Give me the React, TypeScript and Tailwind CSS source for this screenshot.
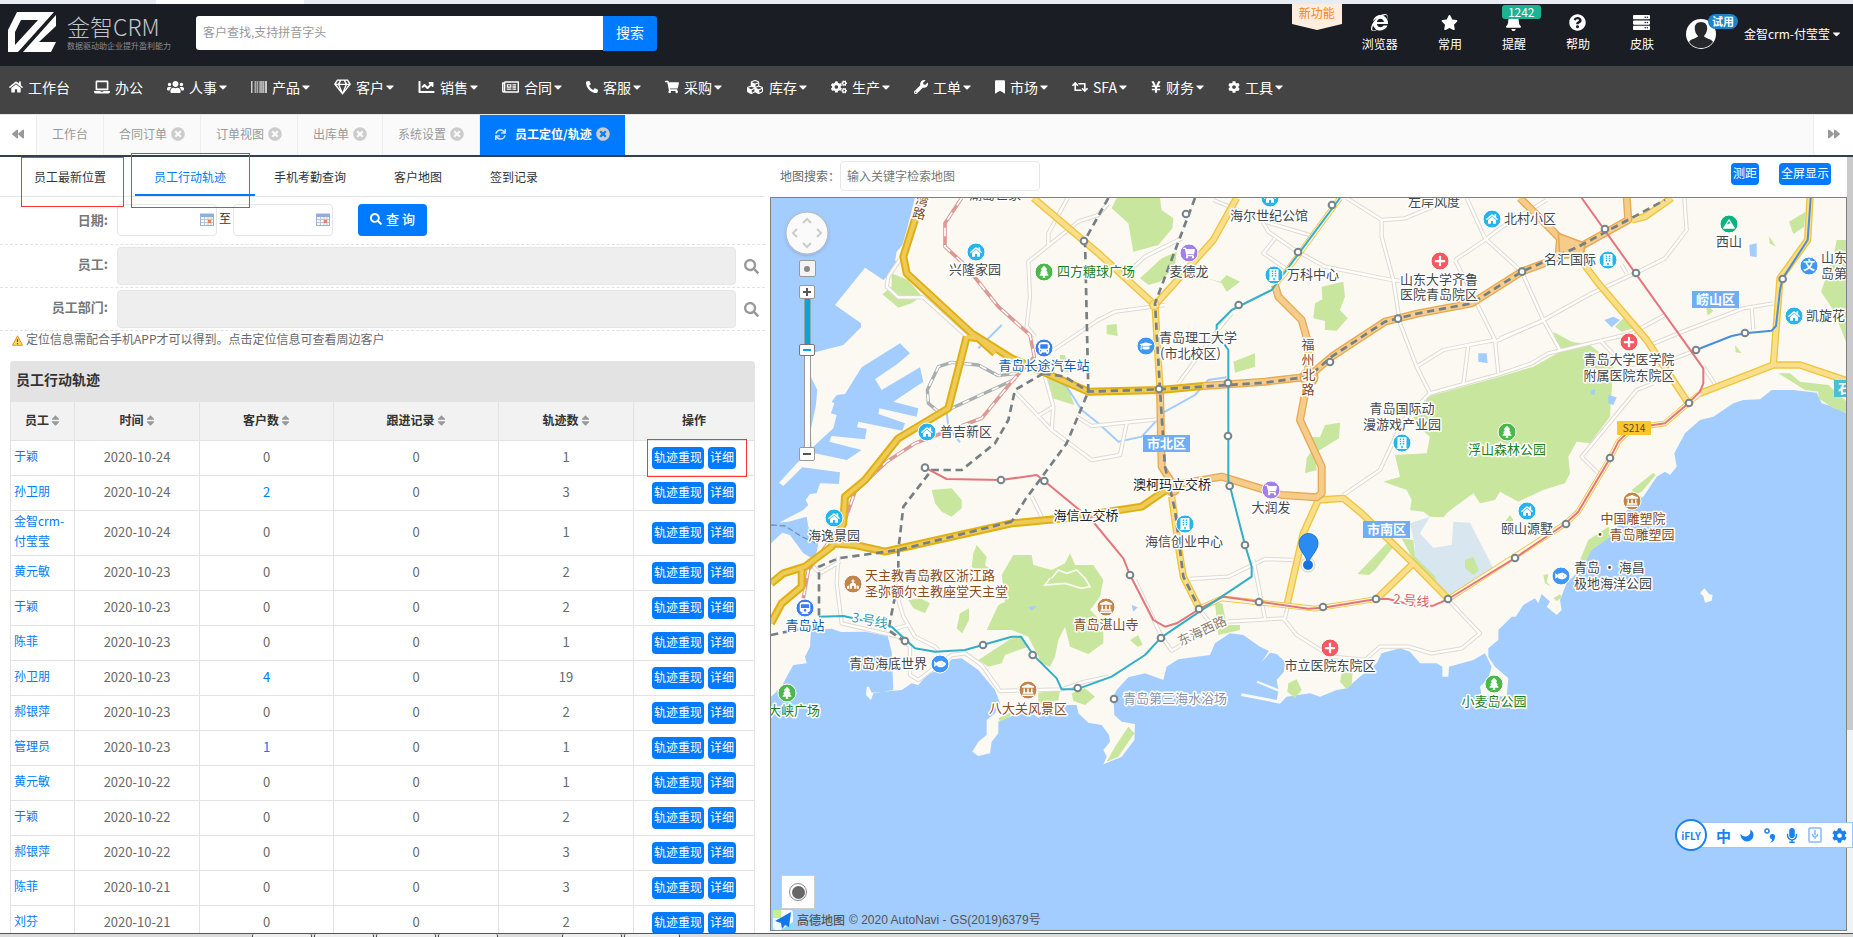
import React, { useState } from 'react';
import type { IconType } from 'react-icons';
import {
  FaBackward, FaBarcode, FaBell, FaBookmark, FaBuilding, FaBus, FaCaretDown, FaChartLine, FaChurch, FaCog, FaCogs,
  FaCubes, FaFish, FaForward, FaGraduationCap, FaHome, FaInternetExplorer, FaLandmark, FaLaptop, FaMicrophone, FaMoon,
  FaMountain, FaPhone, FaPlus, FaQuestionCircle, FaRegGem, FaRegNewspaper, FaRetweet, FaSearch, FaServer,
  FaShoppingCart, FaSort, FaStar, FaSync, FaTimesCircle, FaTrain, FaTree, FaUsers, FaWrench, FaYenSign,
} from 'react-icons/fa';

interface NavItem {
  label: string;
  icon: IconType;
  iconClass: string;
  menu: boolean;
}

const navItems: NavItem[] = [
  { label: '工作台', icon: FaHome, iconClass: 'w-[14px]', menu: false },
  { label: '办公', icon: FaLaptop, iconClass: 'w-4', menu: false },
  { label: '人事', icon: FaUsers, iconClass: 'w-[17px]', menu: true },
  { label: '产品', icon: FaBarcode, iconClass: 'w-4', menu: true },
  { label: '客户', icon: FaRegGem, iconClass: 'w-[17px]', menu: true },
  { label: '销售', icon: FaChartLine, iconClass: 'w-[17px]', menu: true },
  { label: '合同', icon: FaRegNewspaper, iconClass: 'w-[17px]', menu: true },
  { label: '客服', icon: FaPhone, iconClass: 'w-3 -scale-x-100', menu: true },
  { label: '采购', icon: FaShoppingCart, iconClass: 'w-[14px]', menu: true },
  { label: '库存', icon: FaCubes, iconClass: 'w-[18px]', menu: true },
  { label: '生产', icon: FaCogs, iconClass: 'w-4', menu: true },
  { label: '工单', icon: FaWrench, iconClass: 'w-[14px]', menu: true },
  { label: '市场', icon: FaBookmark, iconClass: 'w-[10px]', menu: true },
  { label: 'SFA', icon: FaRetweet, iconClass: 'w-4', menu: true },
  { label: '财务', icon: FaYenSign, iconClass: 'w-[10px]', menu: true },
  { label: '工具', icon: FaCog, iconClass: 'w-3', menu: true },
];

const quickLinks = [
  { label: '浏览器', icon: FaInternetExplorer, badge: '' },
  { label: '常用', icon: FaStar, badge: '' },
  { label: '提醒', icon: FaBell, badge: '1242' },
  { label: '帮助', icon: FaQuestionCircle, badge: '' },
  { label: '皮肤', icon: FaServer, badge: '' },
];

const pageTabs = ['合同订单', '订单视图', '出库单', '系统设置'];
const subTabs = ['员工最新位置', '员工行动轨迹', '手机考勤查询', '客户地图', '签到记录'];

const rows = [
  { name: '于颖', date: '2020-10-24', customers: 0, follows: 0, tracks: 1 },
  { name: '孙卫朋', date: '2020-10-24', customers: 2, follows: 0, tracks: 3 },
  { name: '金智crm-付莹莹', date: '2020-10-24', customers: 0, follows: 0, tracks: 1 },
  { name: '黄元敏', date: '2020-10-23', customers: 0, follows: 0, tracks: 2 },
  { name: '于颖', date: '2020-10-23', customers: 0, follows: 0, tracks: 2 },
  { name: '陈菲', date: '2020-10-23', customers: 0, follows: 0, tracks: 1 },
  { name: '孙卫朋', date: '2020-10-23', customers: 4, follows: 0, tracks: 19 },
  { name: '郝银萍', date: '2020-10-23', customers: 0, follows: 0, tracks: 2 },
  { name: '管理员', date: '2020-10-23', customers: 1, follows: 0, tracks: 1 },
  { name: '黄元敏', date: '2020-10-22', customers: 0, follows: 0, tracks: 1 },
  { name: '于颖', date: '2020-10-22', customers: 0, follows: 0, tracks: 2 },
  { name: '郝银萍', date: '2020-10-22', customers: 0, follows: 0, tracks: 3 },
  { name: '陈菲', date: '2020-10-21', customers: 0, follows: 0, tracks: 3 },
  { name: '刘芬', date: '2020-10-21', customers: 0, follows: 0, tracks: 2 },
];

const columns = [
  { title: '员工', sortable: true, className: 'w-16' },
  { title: '时间', sortable: true, className: 'w-[125px]' },
  { title: '客户数', sortable: true, className: 'w-[134px]' },
  { title: '跟进记录', sortable: true, className: 'w-[165px]' },
  { title: '轨迹数', sortable: true, className: 'w-[135px]' },
  { title: '操作', sortable: false, className: 'w-[121px]' },
];

// ---------- map data, three units to a pixel ----------

const LAND =
  '450,24 425,120 412,165 395,185 390,213 405,210 372,255 355,270 300,233 210,345 288,400 288,412 235,465 150,487 118,510 135,555 157,600 152,650 137,720 140,775 205,715 215,675 198,670 208,640 200,635 215,615 240,612 290,532 405,460 435,490 400,520 330,568 350,600 465,532 475,575 385,635 460,655 455,680 343,655 340,672 420,700 412,722 280,695 276,712 305,716 300,748 200,738 193,755 290,780 245,810 150,790 100,815 42,878 55,888 112,832 225,847 222,882 165,880 155,910 135,912 122,930 130,945 115,960 42,998 70,995 125,980 130,1010 160,1060 150,1110 115,1090 75,1035 52,1028 18,1060 18,1520 50,1490 65,1460 85,1425 125,1420 120,1400 135,1370 138,1320 200,1316 228,1326 300,1325 368,1338 380,1385 385,1500 325,1510 318,1530 303,1515 305,1490 312,1490 320,1508 410,1500 440,1480 460,1485 490,1450 530,1440 560,1408 590,1405 640,1440 690,1500 705,1540 690,1570 665,1590 665,1635 640,1655 622,1685 640,1698 675,1690 680,1655 700,1630 700,1595 760,1570 800,1568 820,1583 850,1570 880,1575 905,1545 935,1545 940,1570 970,1598 1010,1605 1032,1635 1035,1655 1015,1680 1025,1700 1015,1723 1070,1700 1108,1650 1110,1602 1070,1595 1048,1575 1045,1520 1055,1500 1090,1462 1140,1450 1195,1470 1205,1430 1240,1408 1335,1395 1350,1360 1395,1330 1435,1335 1485,1370 1512,1383 1488,1418 1515,1388 1535,1392 1560,1415 1557,1445 1535,1470 1540,1497 1477,1472 1475,1478 1540,1505 1535,1530 1430,1510 1428,1518 1545,1541 1565,1520 1635,1510 1665,1520 1715,1500 1745,1495 1785,1460 1835,1420 1850,1390 1905,1375 1935,1385 1965,1420 2015,1420 2032,1430 2032,1460 2050,1460 2052,1430 2125,1410 2160,1390 2180,1430 2170,1465 2145,1490 2150,1515 2225,1520 2230,1465 2190,1430 2170,1400 2170,1375 2200,1350 2200,1320 2240,1280 2252,1280 2275,1245 2310,1225 2320,1240 2330,1212 2355,1235 2345,1250 2375,1275 2390,1260 2385,1230 2405,1180 2445,1140 2470,1080 2535,1040 2575,980 2600,940 2635,920 2675,860 2700,845 2715,855 2735,830 2728,790 2760,730 2805,690 2845,680 2905,640 2935,630 2985,628 3020,600 3085,600 3155,608 3170,640 3205,650 3245,670 3245,24';

const GREENS = [
  '1055,24 1185,24 1190,60 1225,85 1222,115 1180,165 1105,185 1090,100 1040,55',
  '1125,265 1190,205 1235,185 1230,230 1185,275 1150,285',
  '380,250 430,270 470,318 440,340 400,353 352,313 380,290',
  '1025,405 1055,402 1058,438 1025,432',
  '850,560 905,580 928,645 862,625 848,590',
  '885,495 900,495 915,550 885,540',
  '500,900 560,895 590,930 590,955 560,980 530,965 510,940',
  '1325,265 1365,275 1385,255 1425,275 1385,305 1370,280',
  '1670,290 1735,275 1740,320 1725,360 1748,385 1715,422 1680,420 1680,393 1645,385 1650,340 1672,328',
  '1405,515 1470,490 1470,530 1410,548',
  '1680,705 1725,698 1722,745 1665,780 1650,790 1655,840 1620,850 1625,805 1645,775 1625,740 1665,742',
  '1985,620 2095,590 2205,560 2305,530 2385,485 2365,425 2420,455 2475,465 2545,520 2540,600 2535,680 2475,760 2435,755 2410,800 2415,850 2400,880 2335,900 2260,935 2205,905 2190,930 2145,940 2125,910 2050,965 2035,982 1995,980 1975,965 1935,960 1940,930 1925,900 1855,875 1905,860 1890,795 1985,790 1995,740 1935,690 1975,660',
  '625,1090 635,1065 665,1100 660,1125 680,1140 640,1145 620,1130',
  '665,1320 700,1245 720,1235 710,1155 745,1095 800,1095 805,1125 860,1140 900,1120 915,1090 930,1125 985,1125 1015,1170 1005,1220 975,1260 1015,1300 1015,1360 970,1392 915,1370 900,1310 880,1350 870,1400 855,1430 830,1420 790,1340 740,1320',
  '640,1410 740,1345 770,1340 790,1370 720,1395 710,1420 670,1430',
  '575,1315 585,1270 612,1255 612,1290 592,1330',
  '430,1230 465,1225 495,1240 480,1270 445,1255',
  '1095,1350 1120,1335 1133,1365 1118,1370',
  '920,1510 960,1495 990,1520 960,1545 925,1533',
  '820,1508 885,1500 880,1530 820,1545',
  '1090,1610 1108,1630 1060,1700 1025,1715 1050,1670',
  '700,1585 740,1565 735,1580 705,1595',
  '1350,1240 1372,1240 1385,1305 1425,1305 1425,1320 1360,1335',
  '1570,1480 1595,1468 1610,1500 1590,1525 1567,1505',
  '1730,1450 1763,1445 1760,1485 1745,1498 1725,1475',
  '1777,1152 1875,1050 1890,1065 1830,1140 1812,1155',
  '1910,1045 1945,1050 1950,1100 2012,1160 2012,1180 1950,1120',
  '2205,1015 2235,975 2245,990 2225,1020',
  '2445,1110 2470,1050 2530,1010 2545,1035 2480,1080 2465,1110',
  '2600,900 2665,848 2672,855 2630,905 2610,915',
  '2335,1155 2350,1152 2345,1175 2358,1190 2340,1180',
  '2365,1225 2385,1212 2390,1222 2375,1233',
  '3072,95 3122,65 3118,110 3085,132',
  '3168,305 3205,200 3215,150 3245,150 3245,460 3205,360',
  '3040,550 3075,550 3105,575 3190,585 3245,635 3245,668 3205,655 3160,625 3160,605 3120,600',
  '2550,410 2575,385 2605,415 2570,425',
  '2910,465 2930,490 2912,487',
  '3012,138 3033,170 3014,160',
  '2822,340 2845,362 2828,377',
];

const PONDS = [
  '2518,390 2545,380 2565,390 2540,412',
  '2953,165 2975,160 2975,202 2955,198',
  '2530,615 2555,622 2545,645 2530,640',
  '2140,490 2165,490 2168,520 2140,515',
  '2480,600 2492,598 2488,615 2476,612',
  '790,1250 815,1248 800,1262',
  '1100,1245 1118,1252 1105,1265',
];

const MINOR = [
  '908,24 850,130 850,170',
  '1030,40 1000,75 940,95 790,215 795,320 785,410 810,440',
  '865,480 1000,390 1050,365 1200,345',
  '1250,145 1140,200 1080,255',
  '405,208 370,260 365,290 400,322 475,322 600,435',
  '750,605 860,720 980,810 1065,795 1085,700',
  '840,560 865,650 860,720',
  '815,680 865,650',
  '935,680 980,708 1175,688',
  '1240,580 1350,430 1400,370',
  '1345,30 1490,90 1510,125 1590,180 1680,230 1880,270',
  '1530,145 1495,190 1560,235',
  '1500,95 1650,140',
  '1745,24 1850,90 1920,85 2040,35',
  '1850,90 1850,140 1885,270 1905,400 1955,530 1995,610',
  '1885,270 1960,280',
  '1995,610 2205,552 2300,520 2350,490 2600,430 2700,375',
  '1735,915 1845,840 1915,690 1995,610',
  '2105,24 2160,145 2270,245 2335,390 2385,480',
  '2070,210 2160,150 2205,115 2345,30',
  '2070,210 2135,340 2190,450 2200,550',
  '2190,455 2335,390 2480,310 2600,255 2700,205 2765,120 2758,24',
  '1955,530 2035,480 2110,465 2190,450',
  '2110,465 2095,585',
  '2205,445 2335,392',
  '2655,465 2765,420 2935,355 3025,340',
  '2960,350 2965,420',
  '2665,580 2615,600 2450,800 2500,850',
  '2505,450 2585,535 2665,530 2795,480',
  '2815,530 2855,590',
  '2570,225 2585,250',
  '800,920 830,980',
  '220,1100 215,1180 230,1300 400,1340 435,1370 435,1455 460,1470 560,1395 600,1390 650,1425 705,1503 890,1498 960,1475 1030,1460',
  '375,1320 430,1305',
  '400,1230 415,1280 450,1340 510,1370 520,1380',
  '125,1110 165,1150 225,1115',
  '1275,1167 1390,1160 1500,1107 1585,1110',
  '1465,1110 1500,1285',
  '1305,1260 1335,1298 1555,1285 1595,1335 1700,1400 1800,1410 1845,1370 1930,1370 2000,1390 2090,1375 2145,1330 2050,1230',
  '1560,1285 1570,1240',
  '1110,1170 1190,1340 1220,1382 1340,1310',
];

const YELLOW = [
  '805,24 1000,190 1170,345 1345,150 1415,24',
  '1170,345 1185,600',
  '1220,920 1245,1100 1255,1160 1303,1255',
  '1660,930 1615,1030 1567,1240',
  '1660,930 1735,925 1790,970 1945,1120 2050,1227',
  '1945,1120 1835,1227',
  '2455,220 2500,280 2645,450 2770,640',
  '2805,610 3025,525 3105,525 3245,572',
  '3135,24 3128,150 3045,265 3025,525',
  '2600,90 2640,80 2720,24',
];

const THIN_YELLOW = [
  '1725,24 1560,250 1530,285',
  '1303,1255 1370,1225 1650,1256 1835,1227',
  '2050,1227 2400,1002 2440,965 2535,805 2560,755 2600,715 2700,700 2772,638 2805,610',
];

const ORANGE = [
  '1315,588 1500,575 1630,560 1700,500 1860,395 1960,370 2120,340 2270,245 2350,215 2455,165 2590,90 2585,24',
  '1530,285 1540,320 1610,390 1630,460 1630,560 1605,690 1670,830 1670,910 1655,922 1550,915 1370,860 1225,885 1190,830 1185,600',
  '2265,24 2385,145 2450,180',
  '2385,145 2380,205',
];

const GOLD = [
  '470,24 415,200 425,250 620,430 740,505 970,605 1185,600 1315,588',
  '605,440 550,655 400,745 300,870 240,920 235,1000 200,1070 120,1130 55,1150 18,1180',
  '605,440 640,445 690,490',
  '200,1060 270,1065 360,1085 740,1000 900,985 1130,950 1225,885',
  '110,1130 110,1190 50,1240 18,1300',
];

const DASHED = [
  '1030,24 960,150 970,605 905,760 780,930 740,995',
  '740,995 400,1080 220,1105 162,1130 162,1290',
  '835,550 750,600 730,690 690,760 590,840 500,840 415,950 400,1080 400,1170 370,1320 420,1355',
  '835,550 900,560 970,605 1185,598 1500,578 1630,560 1700,500 1860,395 1960,370 2120,340 2270,245 2440,170 2700,30',
  '1290,24 1170,340 1185,600 1200,830 1230,960 1255,1160 1303,1255',
  '18,1335 100,1318',
];

const RAIL_PINK = '590,24 540,100 540,170 600,225 700,350 795,435 808,500 740,575 650,685 450,760 365,815 270,905 240,990 130,1140 115,1225';
const RAIL_GRAY = '755,550 700,557 640,525 560,517 520,530 487,600 490,640 520,665 560,655 750,568';
const METRO_RED =
  '480,833 545,867 708,870 815,855 838,873 980,990 1075,1105 1095,1155 1165,1290 1200,1310 1235,1300 1303,1257 1375,1220 1630,1256 1674,1253 1835,1227 1870,1227 1950,1247 2005,1247 2050,1227 2250,1104 2400,1002 2440,965 2535,805 2560,755 2600,715 2700,700 2772,638 2805,605 2815,580 2815,535 2450,24';
const METRO_CYAN =
  '162,1280 235,1278 380,1310 450,1375 510,1385 600,1380 740,1340 768,1340 805,1395 875,1465 890,1498 935,1498 1040,1460 1140,1395 1188,1343 1370,1220 1460,1160 1460,1130 1440,1065 1390,870 1390,480 1355,430 1355,405 1400,360 1520,300 1725,24';
const METRO_BLUE = '2793,480 2900,438 2940,430 3020,422 3033,408 3045,300 3053,265 3128,150 3137,24';

const STATIONS = [
  [957, 153], [1182, 597], [480, 833], [708, 870], [838, 873], [1263, 72], [1701, 45], [1599, 186], [1421, 345],
  [1389, 579], [1389, 738], [1394, 888], [1695, 516], [1899, 386], [2271, 245], [2520, 117], [2613, 249], [3053, 267],
  [2940, 429], [2793, 480], [2772, 639], [2535, 804], [420, 1353], [654, 1365], [803, 1395], [938, 1494], [1047, 1527],
  [1095, 1155], [1188, 1344], [1302, 1257], [1482, 1236], [1674, 1251], [1833, 1227], [2049, 1227], [2250, 1104],
  [1440, 1065], [2403, 1002],
];

const CYAN = '#27b4ec';
const BLUE = '#3f97f5';
const GREEN = '#4bb84b';
const BROWN = '#c1854b';

const POIS: { x: number; y: number; color: string; icon: IconType }[] = [
  { x: 633, y: 186, color: CYAN, icon: FaHome },
  { x: 837, y: 246, color: GREEN, icon: FaTree },
  { x: 837, y: 473, color: '#3b7df0', icon: FaBus },
  { x: 485, y: 725, color: CYAN, icon: FaHome },
  { x: 1515, y: 24, color: CYAN, icon: FaHome },
  { x: 1272, y: 188, color: '#a37fe8', icon: FaShoppingCart },
  { x: 1526, y: 255, color: CYAN, icon: FaBuilding },
  { x: 2181, y: 87, color: CYAN, icon: FaHome },
  { x: 2025, y: 213, color: '#f4595f', icon: FaPlus },
  { x: 1142, y: 468, color: BLUE, icon: FaGraduationCap },
  { x: 1911, y: 759, color: CYAN, icon: FaBuilding },
  { x: 2226, y: 726, color: GREEN, icon: FaTree },
  { x: 1518, y: 900, color: '#a37fe8', icon: FaShoppingCart },
  { x: 1260, y: 1002, color: CYAN, icon: FaBuilding },
  { x: 2892, y: 102, color: '#08b47d', icon: FaMountain },
  { x: 2529, y: 210, color: CYAN, icon: FaBuilding },
  { x: 3087, y: 378, color: CYAN, icon: FaHome },
  { x: 2592, y: 456, color: '#f4595f', icon: FaPlus },
  { x: 2601, y: 933, color: BROWN, icon: FaLandmark },
  { x: 2286, y: 963, color: CYAN, icon: FaHome },
  { x: 2388, y: 1158, color: BLUE, icon: FaFish },
  { x: 2187, y: 1482, color: GREEN, icon: FaTree },
  { x: 1695, y: 1374, color: '#f4595f', icon: FaPlus },
  { x: 1023, y: 1250, color: BROWN, icon: FaLandmark },
  { x: 789, y: 1500, color: BROWN, icon: FaLandmark },
  { x: 525, y: 1421, color: BLUE, icon: FaFish },
  { x: 66, y: 1509, color: GREEN, icon: FaTree },
  { x: 120, y: 1254, color: '#3b7df0', icon: FaTrain },
  { x: 264, y: 1182, color: BROWN, icon: FaChurch },
  { x: 207, y: 984, color: CYAN, icon: FaHome },
];

interface MapLabel {
  text: string;
  x: number;
  y: number;
  anchor?: 'start' | 'middle';
  color?: string;
  rotate?: number;
}

const LABELS: MapLabel[] = [
  { text: '湖岛世家', x: 690, y: 28 },
  { text: '兴隆家园', x: 631, y: 252 },
  { text: '四方糖球广场', x: 875, y: 258, anchor: 'start', color: '#1d7f1d' },
  { text: '青岛长途汽车站', x: 837, y: 540, color: '#0b5fb0' },
  { text: '普吉新区', x: 525, y: 738, anchor: 'start' },
  { text: '海尔世纪公馆', x: 1513, y: 91 },
  { text: '麦德龙', x: 1272, y: 257 },
  { text: '万科中心', x: 1565, y: 267, anchor: 'start' },
  { text: '左岸风度', x: 2008, y: 47 },
  { text: '北村小区', x: 2218, y: 100, anchor: 'start' },
  { text: '山东大学齐鲁', x: 2023, y: 281 },
  { text: '医院青岛院区', x: 2023, y: 328 },
  { text: '青岛理工大学', x: 1182, y: 456, anchor: 'start' },
  { text: '(市北校区)', x: 1185, y: 503, anchor: 'start' },
  { text: '福', x: 1628, y: 477, color: '#7a4a2a' },
  { text: '州', x: 1630, y: 523, color: '#7a4a2a' },
  { text: '北', x: 1632, y: 568, color: '#7a4a2a' },
  { text: '路', x: 1630, y: 612, color: '#7a4a2a' },
  { text: '湾', x: 468, y: 45, color: '#7a4a2a', rotate: 12 },
  { text: '路', x: 460, y: 84, color: '#7a4a2a', rotate: 12 },
  { text: '青岛国际动', x: 1912, y: 670 },
  { text: '漫游戏产业园', x: 1910, y: 718 },
  { text: '浮山森林公园', x: 2225, y: 792, color: '#1d7f1d' },
  { text: '澳柯玛立交桥', x: 1220, y: 897, color: '#222' },
  { text: '海信立交桥', x: 963, y: 990, color: '#222' },
  { text: '大润发', x: 1518, y: 967 },
  { text: '海信创业中心', x: 1258, y: 1068 },
  { text: '西山', x: 2891, y: 168 },
  { text: '名汇国际', x: 2338, y: 223, anchor: 'start' },
  { text: '山东', x: 3169, y: 217, anchor: 'start' },
  { text: '岛第', x: 3169, y: 264, anchor: 'start' },
  { text: '凯旋花', x: 3124, y: 390, anchor: 'start' },
  { text: '青岛大学医学院', x: 2592, y: 523 },
  { text: '附属医院东院区', x: 2592, y: 571 },
  { text: '中国雕塑院', x: 2603, y: 1000, color: '#8a4a1c' },
  { text: '· 青岛雕塑园', x: 2606, y: 1047, color: '#8a4a1c' },
  { text: '颐山源墅', x: 2285, y: 1030 },
  { text: '青岛 · 海昌', x: 2426, y: 1147, anchor: 'start' },
  { text: '极地海洋公园', x: 2426, y: 1195, anchor: 'start' },
  { text: '小麦岛公园', x: 2187, y: 1548, color: '#1d7f1d' },
  { text: '市立医院东院区', x: 1696, y: 1440 },
  { text: '青岛第三海水浴场', x: 1073, y: 1540, anchor: 'start', color: '#8793a8' },
  { text: '东海西路', x: 1316, y: 1335, color: '#8a7f70', rotate: -25 },
  { text: '2 号线', x: 1938, y: 1246, color: '#dd5f67', rotate: 5 },
  { text: '3 号线', x: 312, y: 1304, color: '#2a9fbb', rotate: 10 },
  { text: '青岛湛山寺', x: 1023, y: 1317, color: '#8a4a1c' },
  { text: '八大关风景区', x: 788, y: 1568, color: '#8a4a1c' },
  { text: '青岛海底世界', x: 370, y: 1434 },
  { text: '大峡广场', x: 88, y: 1576, color: '#1d7f1d' },
  { text: '青岛站', x: 120, y: 1319, color: '#0b5fb0' },
  { text: '天主教青岛教区浙江路', x: 300, y: 1170, anchor: 'start', color: '#8a4a1c' },
  { text: '圣弥额尔主教座堂天主堂', x: 300, y: 1218, anchor: 'start', color: '#8a4a1c' },
  { text: '海逸景园', x: 206, y: 1051 },
];

const DISTRICTS = [
  { text: '市北区', x: 1134, y: 735, w: 47, fill: '#6eaef6' },
  { text: '市南区', x: 1794, y: 993, w: 47, fill: '#6eaef6' },
  { text: '崂山区', x: 2781, y: 303, w: 47, fill: '#6eaef6' },
  { text: '石', x: 3207, y: 570, w: 17, fill: '#4dbfd1' },
];

const px = (u: number) => Math.round(u / 3);

interface RoadsProps {
  lines: string[];
  outer: string;
  inner: string;
  width: number;
  innerWidth: number;
}

const Roads = ({ lines, outer, inner, width, innerWidth }: RoadsProps) => (
  <g fill="none" strokeLinejoin="round">
    {lines.map((p) => <polyline key={p} points={p} stroke={outer} strokeWidth={width} />)}
    {lines.map((p) => <polyline key={p} points={p} stroke={inner} strokeWidth={innerWidth} />)}
  </g>
);

const CityMap = () => (
  <svg className="absolute inset-0 h-full w-full" viewBox="6 8 1075 732" preserveAspectRatio="xMinYMin slice" aria-label="地图">
    <g transform="scale(0.333333)">
      <rect x="0" y="0" width="4800" height="3600" fill="#a3ccff" />
      <polygon points={LAND} fill="#fcf9f2" />
      <polygon points="2805,1210 2818,1195 2832,1212 2843,1215 2840,1232 2820,1238 2815,1218" fill="#fcf9f2" />
      <polygon points="1935,1000 1995,980 1965,1030 2005,1073 2060,1065 2065,995 2115,998 2185,1135 2045,1220 1945,1100 1950,1070" fill="#d8e7ef" />
      {GREENS.map((p) => <polygon key={p} points={p} fill="#c9e69f" />)}
      <polygon points="2100,1110 2125,1100 2142,1140 2125,1155 2100,1135" fill="#c9e69f" />
      {PONDS.map((p) => <polygon key={p} points={p} fill="#a3ccff" />)}
      <g fill="none" stroke="#fcf9f2" strokeWidth="5">
        <polyline points="860,1165 880,1140 905,1150 935,1140 960,1165 975,1190 950,1195 900,1180 840,1185 855,1165" />
      </g>
      <g fill="none" stroke="#a3ccff" strokeWidth="6">
        <polyline points="710,405 640,475" />
        <polyline points="545,665 550,710 585,757" />
        <polyline points="855,560 905,590 950,660 1000,700 1060,755 1130,740 1200,665 1290,615 1330,570 1385,562" />
      </g>
      <polyline points="18,1005 60,1008 110,1040 160,1062" fill="none" stroke="#6f93bd" strokeWidth="4" strokeDasharray="18 8" />
      <Roads lines={MINOR} outer="#dfd9cf" inner="#ffffff" width={13} innerWidth={7} />
      <polyline points={RAIL_GRAY} fill="none" stroke="#a8aeb0" strokeWidth="10" strokeLinejoin="round" />
      <polyline points={RAIL_GRAY} fill="none" stroke="#fff" strokeWidth="5" strokeDasharray="22 26" />
      <polyline points={RAIL_PINK} fill="none" stroke="#dc9a96" strokeWidth="11" strokeLinejoin="round" />
      <polyline points={RAIL_PINK} fill="none" stroke="#fff" strokeWidth="5" strokeDasharray="26 26" />
      <Roads lines={YELLOW} outer="#f0c53c" inner="#f9df8c" width={22} innerWidth={14} />
      <Roads lines={THIN_YELLOW} outer="#f0c53c" inner="#fdf8e6" width={17} innerWidth={12} />
      <Roads lines={ORANGE} outer="#e8a951" inner="#f5cc8c" width={24} innerWidth={16} />
      <circle cx="1632" cy="562" r="26" fill="#f5cc8c" stroke="#e8a951" strokeWidth="5" />
      <circle cx="1222" cy="892" r="24" fill="#f5cc8c" stroke="#e8a951" strokeWidth="5" />
      <circle cx="1168" cy="345" r="14" fill="#f9df8c" stroke="#f0c53c" strokeWidth="4" />
      <polygon points="2380,130 2460,160 2455,200 2385,205" fill="#f5cc8c" stroke="#e8a951" strokeWidth="5" />
      <Roads lines={GOLD} outer="#dfb010" inner="#eecb58" width={24} innerWidth={12} />
      <g fill="none" stroke="#757f84" strokeWidth="8" strokeDasharray="22 14">
        {DASHED.map((p) => <polyline key={p} points={p} />)}
      </g>
      <g fill="none" strokeWidth="6" strokeLinejoin="round">
        <polyline points={METRO_RED} stroke="#e6757b" />
        <polyline points={METRO_CYAN} stroke="#33aec9" />
        <polyline points={METRO_BLUE} stroke="#4a8fd6" />
      </g>
      {STATIONS.map(([x, y]) => (
        <circle key={`${x}-${y}`} cx={x} cy={y} r="10" fill="#fff" stroke="#76858b" strokeWidth="6" />
      ))}
    </g>

    {POIS.map(({ x, y, color, icon: Icon }) => (
      <g key={`${x}-${y}`}>
        <circle cx={px(x)} cy={px(y)} r="9" fill={color} stroke="#fff" strokeWidth="1" />
        <Icon x={px(x) - 6} y={px(y) - 6} size={12} color="#fff" />
      </g>
    ))}
    <circle cx={px(3132)} cy={px(228)} r="9" fill={BLUE} stroke="#fff" strokeWidth="1" />
    <text x={px(3132)} y={px(228) + 4} fontSize="12" fontWeight="700" fill="#fff" textAnchor="middle">文</text>

    {LABELS.map(({ text, x, y, anchor = 'middle', color = '#43484d', rotate = 0 }) => (
      <text
        key={`${text}-${x}-${y}`}
        x={px(x)}
        y={px(y)}
        fontSize="13"
        fill={color}
        stroke="#fff"
        strokeWidth="3"
        strokeLinejoin="round"
        paintOrder="stroke"
        textAnchor={anchor}
        transform={rotate ? `rotate(${rotate} ${px(x)} ${px(y)})` : undefined}
      >
        {text}
      </text>
    ))}

    {DISTRICTS.map(({ text, x, y, w, fill }) => (
      <g key={text}>
        <rect x={px(x)} y={px(y)} width={w} height="17" fill={fill} />
        <text x={px(x) + 4} y={px(y) + 13} fontSize="13" fontWeight="700" fill="#fff">{text}</text>
      </g>
    ))}
    <rect x={px(2557)} y={px(693)} width="34" height="14" rx="1" fill="#fdc42b" />
    <text x={px(2557) + 17} y={px(693) + 11} fontSize="10" fill="#5b4a1c" textAnchor="middle">S214</text>

    {/* current position */}
    <circle cx="543" cy="375" r="7" fill="#fff" stroke="#d9cdbd" strokeWidth="1" />
    <circle cx="543" cy="375" r="5" fill="#1673e0" />
    <path d="M543 374c-1-8-9-13-9-21a9 9 0 0 1 19 0c0 8-8 13-10 21z" fill="#2b8bf5" stroke="#1b72d6" strokeWidth="1" />
  </svg>
);

const MapControls = () => (
  <div className="absolute left-[14px] top-[13px] flex w-11 flex-col items-center">
    <svg className="h-11 w-11 rounded-full shadow" viewBox="0 0 44 44" aria-label="平移">
      <circle cx="22" cy="22" r="21" fill="#fafafa" stroke="#b5b5b5" strokeWidth="1" />
      <path d="M18 12l4-4 4 4M18 32l4 4 4-4M12 18l-4 4 4 4M32 18l4 4-4 4" fill="none" stroke="#ccc" strokeWidth="2" />
    </svg>
    <button type="button" aria-label="定位" className="mt-[5px] flex h-[17px] w-[17px] items-center justify-center rounded-xs border border-[#999] bg-[#f4f4f4]">
      <span className="h-[6px] w-[6px] rounded-full bg-[#888]" />
    </button>
    <button type="button" aria-label="放大" className="relative mt-2 h-[14px] w-4 rounded-xs border border-[#999] bg-white">
      <svg className="absolute inset-0 h-full w-full" viewBox="0 0 14 12"><path d="M3 6h8M7 2v8" stroke="#555" strokeWidth="2" /></svg>
    </button>
    <div className="h-[45px] w-[7px] border-x border-[#8aa] bg-[#0aa3de]" />
    <div className="flex h-3 w-4 items-center justify-center rounded-xs border border-[#777] bg-white">
      <span className="h-0.5 w-2 bg-[#0aa3de]" />
    </div>
    <div className="h-[91px] w-[7px] border-x border-[#999] bg-white" />
    <button type="button" aria-label="缩小" className="flex h-[14px] w-4 items-center justify-center rounded-xs border border-[#999] bg-white">
      <span className="h-0.5 w-2 bg-[#555]" />
    </button>
  </div>
);

const SmallButton = ({ children }: { children: React.ReactNode }) => (
  <button type="button" className="h-[22px] rounded bg-[#007aff] px-0.5 pb-0.5 text-xs leading-5 text-white">
    {children}
  </button>
);

const Header = () => (
  <header className="flex h-[62px] shrink-0 items-start bg-[#1a1d24] text-white">
    <a href="#" className="flex w-[196px] pl-2 pt-2">
      <svg className="h-10 w-12" viewBox="0 0 48 40" aria-label="金智CRM">
        <path d="M9 0H46L10 40H0V18zM13 8L7 20V33L30 8z" fill="#fff" fillRule="evenodd" />
        <path d="M48 3V14L31 30H48L43 40H15z" fill="#fff" />
      </svg>
      <span className="pl-[11px]">
        <span className="block h-7 whitespace-nowrap text-[23px] font-light leading-7 text-[#c3c5c9]">金智CRM</span>
        <span className="block whitespace-nowrap text-[8px] leading-3 text-[#8b8d92]">数据驱动助企业提升盈利能力</span>
      </span>
    </a>
    <form className="mt-3 flex" onSubmit={(e) => e.preventDefault()}>
      <input
        type="text"
        aria-label="客户查找"
        placeholder="客户查找,支持拼音字头"
        className="h-[34px] w-[407px] rounded-l-[3px] bg-white px-[7px] pb-1 text-xs text-[#333] outline-none placeholder:text-[#999]"
      />
      <button type="submit" className="h-[35px] w-[54px] rounded-r-[3px] bg-[#007aff] pb-1 text-sm">搜索</button>
    </form>
    <div className="relative ml-auto h-[26px] w-[50px] text-center text-xs leading-[18px] text-[#ff8412]">
      <svg className="absolute inset-0 h-full w-full" viewBox="0 0 50 26"><path d="M0 0h50v20l-25 6-25-6z" fill="#ffeee0" /></svg>
      <span className="relative">新功能</span>
    </div>
    <nav className="flex">
      {quickLinks.map(({ label, icon: Icon, badge }) => (
        <a key={label} href="#" className="relative flex flex-col items-center px-5 pt-[10px] text-xs">
          <Icon className="h-[17px] w-[17px]" />
          <span className="mt-1 leading-[18px]">{label}</span>
          {badge && (
            <span className="absolute left-5 top-px h-[14px] rounded-[3px] bg-[#1ab394] px-1.5 text-xs leading-[14px]">{badge}</span>
          )}
        </a>
      ))}
    </nav>
    <a href="#" className="relative flex h-[60px] items-center pl-3 pr-3 text-xs">
      <svg className="h-[30px] w-[30px]" viewBox="0 0 30 30" aria-hidden="true">
        <circle cx="15" cy="15" r="15" fill="#fff" />
        <path d="M15 3c5 0 7 4 6 8-.500 3-2 5-3 6 0 2 8 3 9 6a15 15 0 0 1-24 0c1-3 9-4 9-6-1-1-3-3-3-6-1-4 1-8 6-8z" fill="#26282c" />
      </svg>
      <span className="absolute left-[34px] top-[10px] h-[15px] rounded-full bg-[#1c84c6] px-1 text-[11px] font-bold leading-[14px]">试用</span>
      <span className="ml-7 whitespace-nowrap">金智crm-付莹莹</span>
      <FaCaretDown className="ml-0.5 w-[9px]" />
    </a>
  </header>
);

const MainNav = () => (
  <nav className="flex h-12 shrink-0 bg-[#444] text-sm text-white">
    {navItems.map(({ label, icon: Icon, iconClass, menu }) => (
      <a key={label} href="#" className="flex h-[42px] items-center whitespace-nowrap pl-[9px] pr-[15px]">
        <Icon className={`h-4 shrink-0 ${iconClass}`} />
        <span className="ml-[5px]">{label}</span>
        {menu && <FaCaretDown className="ml-0.5 w-2" />}
      </a>
    ))}
  </nav>
);

const PageTabs = () => (
  <div className="flex h-[43px] shrink-0 border-b-2 border-t border-b-[#2f4050] border-t-[#e7e7e7] bg-[#fafafa] text-xs text-[#999]">
    <button type="button" aria-label="向左" className="flex w-[37px] items-center justify-center border-r border-[#eee] bg-white pb-0.5">
      <FaBackward className="h-3 w-3" />
    </button>
    <a href="#" className="flex w-[67px] items-center justify-center border-r border-[#eee] pb-0.5">工作台</a>
    {pageTabs.map((tab) => (
      <div key={tab} className="flex items-center gap-1 border-r border-[#eee] px-[15px] pb-0.5">
        <a href="#">{tab}</a>
        <button type="button" aria-label={`关闭${tab}`}>
          <FaTimesCircle className="h-[14px] w-[14px] text-[#ccc]" />
        </button>
      </div>
    ))}
    <div className="flex items-center bg-[#007aff] px-[15px] pb-0.5 font-bold text-white">
      <FaSync className="mr-[9px] h-[11px] w-[11px] text-[#cce4ff]" />
      <a href="#">员工定位/轨迹</a>
      <button type="button" aria-label="关闭员工定位/轨迹" className="ml-1">
        <FaTimesCircle className="h-[14px] w-[14px] text-[#ccc]" />
      </button>
    </div>
    <button type="button" aria-label="向右" className="ml-auto flex w-10 items-center justify-center border-l border-[#eee] bg-white pb-0.5">
      <FaForward className="h-3 w-3" />
    </button>
  </div>
);

const DateInput = ({ id, label }: { id: string; label: string }) => (
  <div className="relative">
    <input id={id} type="text" aria-label={label} className="h-8 w-[100px] rounded border border-[#e5e6e7] bg-white px-2 text-xs" />
    <svg className="absolute right-[3px] top-[9px] h-[13px] w-[14px]" viewBox="0 0 14 13" aria-hidden="true">
      <rect x="0.500" y="1" width="13" height="11.500" fill="#f6f8fc" stroke="#9cb1cf" />
      <rect x="1" y="1" width="12" height="3" fill="#8fb0dc" />
      <path d="M1 6.500h12M1 9.500h12M4.500 4v8M8 4v8M11 4v8" stroke="#b7c6dc" strokeWidth="1" />
      <rect x="8" y="7" width="3" height="3" fill="#e9805e" />
    </svg>
  </div>
);

const PickerRow = ({ id, label }: { id: string; label: string }) => (
  <div className="flex h-[43px] items-center border-b border-dashed border-[#e3e3e3] pr-[6px]">
    <label htmlFor={id} className="w-[117px] pb-1 pr-[9px] text-right text-[13px] font-bold text-[#777]">{label}:</label>
    <input id={id} type="text" readOnly className="h-[38px] min-w-0 flex-1 rounded border border-[#e5e6e7] bg-[#eee] px-2 text-xs" />
    <button type="button" aria-label={`选择${label}`} className="ml-2">
      <FaSearch className="h-[15px] w-[15px] text-[#999]" />
    </button>
  </div>
);

const TrackTable = () => (
  <div className="mx-[10px] mt-[14px] w-[745px]">
    <h5 className="h-10 rounded-t bg-[#e3e3e3] pl-[6px] text-sm font-bold leading-9 text-[#333]">员工行动轨迹</h5>
    <table className="w-full table-fixed border-collapse text-center text-xs text-[#676a6c]">
      <thead>
        <tr className="h-[39px] bg-[#f2f2f2] text-[#333]">
          {columns.map(({ title, sortable, className }) => (
            <th key={title} scope="col" className={`border border-[#e3e3e3] p-0 pb-0.5 font-bold ${className}`}>
              <span className="inline-flex items-center gap-0.5">
                {title}
                {sortable && <FaSort className="h-[13px] w-[9px] text-[#999]" />}
              </span>
            </th>
          ))}
        </tr>
      </thead>
      <tbody className="[&_td]:border [&_td]:border-[#e3e3e3]">
        {rows.map((row, i) => (
          <tr key={i} className="h-[35px]">
            <td className="p-0 pb-1 pl-[3px] text-left leading-5">
              <a href="#" className="block text-[#007aff]">{row.name}</a>
            </td>
            <td className="p-0 pb-0.5 text-[13px]">{row.date}</td>
            <td className="p-0 pb-0.5 text-[13px]">
              {row.customers ? <a href="#" className="text-[#007aff]">{row.customers}</a> : row.customers}
            </td>
            <td className="p-0 pb-0.5 text-[13px]">{row.follows}</td>
            <td className="p-0 pb-0.5 text-[13px]">{row.tracks}</td>
            <td className="relative p-0">
              <div className="flex justify-center gap-1">
                <SmallButton>轨迹重现</SmallButton>
                <SmallButton>详细</SmallButton>
              </div>
              {i === 0 && <div className="pointer-events-none absolute -bottom-0.5 -top-0.5 left-[13px] right-[7px] border border-[#f33]" />}
            </td>
          </tr>
        ))}
      </tbody>
    </table>
  </div>
);

const TrackPanel = () => {
  const [activeTab, setActiveTab] = useState('员工行动轨迹');

  return (
    <section className="relative h-full w-[765px] shrink-0 overflow-hidden">
      <div className="relative flex h-10 border-b border-[#e5e5e5] pl-[10px] text-xs text-[#333]">
        {subTabs.map((tab) => (
          <button
            key={tab}
            type="button"
            onClick={() => setActiveTab(tab)}
            className={tab === activeTab ? 'px-6 text-[#007aff]' : 'px-6'}
          >
            {tab}
          </button>
        ))}
        <div className="absolute bottom-0 left-[135px] h-0.5 w-[120px] bg-[#007aff]" />
      </div>

      <form onSubmit={(e) => e.preventDefault()}>
        <div className="flex h-12 items-center border-b border-dashed border-[#e3e3e3] pb-px">
          <label htmlFor="date-from" className="w-[117px] pr-[9px] text-right text-[13px] font-bold text-[#777]">日期:</label>
          <DateInput id="date-from" label="开始日期" />
          <span className="w-4 pb-1 text-center text-xs text-[#333]">至</span>
          <DateInput id="date-to" label="结束日期" />
          <button type="submit" className="ml-[25px] flex h-8 w-[69px] items-center justify-center gap-1 rounded bg-[#007aff] pb-0.5 text-[13px] font-medium text-white">
            <FaSearch className="h-3 w-3" />
            查 询
          </button>
        </div>
        <PickerRow id="employee" label="员工" />
        <PickerRow id="department" label="员工部门" />
      </form>

      <p className="flex items-center pl-3 pt-0 text-xs leading-4 text-[#676a6c]">
        <svg className="mr-[3px] mt-[3px] h-[11px] w-[11px]" viewBox="0 0 11 11" aria-hidden="true">
          <path d="M5.500 .8l5 9.500H.5z" fill="#fbd75a" stroke="#d99a2b" strokeWidth="1" />
          <path d="M5.500 4v3M5.500 8v1.300" stroke="#8a5a10" strokeWidth="1.200" />
        </svg>
        定位信息需配合手机APP才可以得到。点击定位信息可查看周边客户
      </p>
      <TrackTable />
    </section>
  );
};

const ImeBar = () => (
  <div className="absolute bottom-[86px] right-0 flex items-center text-[#1a82f0]">
    <div className="z-10 -mr-4 flex h-8 w-8 items-center justify-center rounded-full border-2 border-current bg-white text-[10px] font-bold">iFLY</div>
    <div className="flex h-[26px] items-center gap-[10px] border border-[#9cc8f7] bg-white pl-6 pr-[5px]">
      <span className="text-[15px] font-bold leading-none">中</span>
      <FaMoon className="h-[13px] w-[13px] -scale-x-100 rotate-45" />
      <svg className="h-[15px] w-3" viewBox="0 0 12 15" aria-hidden="true">
        <circle cx="3" cy="3" r="2" fill="none" stroke="currentColor" strokeWidth="1.500" />
        <path d="M8.500 6a2.500 2.500 0 0 1 2.500 2.700C11 12 9 14 6 14.500c1.500-1 2-2 2-3.500a2.500 2.500 0 0 1 .5-5z" fill="currentColor" />
      </svg>
      <FaMicrophone className="h-[15px] w-3" />
      <svg className="h-4 w-[14px]" viewBox="0 0 14 16" fill="none" stroke="#83bbf6" aria-hidden="true">
        <rect x="1" y="1" width="12" height="14" rx="1" strokeWidth="1.500" />
        <path d="M7 3v5M4.500 7c0 3.500 5 3.500 5 0M7 10v2" strokeWidth="1.500" />
      </svg>
      <FaCog className="h-[15px] w-[15px]" />
    </div>
  </div>
);

const MapPanel = () => (
  <section className="flex min-w-0 flex-1 flex-col pb-0.5 pl-[5px]">
    <div className="flex h-10 shrink-0 items-center pb-0.5 pl-[10px] pr-4 text-xs text-[#676a6c]">
      <label htmlFor="map-search" className="w-[60px] whitespace-nowrap">地图搜索：</label>
      <input
        id="map-search"
        type="text"
        placeholder="输入关键字检索地图"
        className="h-[30px] w-[200px] rounded border border-[#e5e6e7] px-[6px] pb-0.5 text-xs outline-none placeholder:text-[#777]"
      />
      <div className="ml-auto flex gap-5 pb-1">
        <SmallButton>测距</SmallButton>
        <SmallButton>全屏显示</SmallButton>
      </div>
    </div>
    <div className="relative flex-1 overflow-hidden border border-[#808080] bg-[#a3ccff]">
      <CityMap />
      <MapControls />
      <div className="absolute bottom-0 left-[2px] text-[#555]">
        <button type="button" aria-label="切换图层" className="ml-2 flex h-[34px] w-[34px] items-center justify-center border border-[#ccc] bg-white">
          <span className="flex h-[18px] w-[18px] items-center justify-center rounded-full border border-[#888]">
            <span className="h-[13px] w-[13px] rounded-full bg-[#666]" />
          </span>
        </button>
        <div className="flex h-[21px] items-center text-xs">
          <svg className="h-5 w-5" viewBox="0 0 20 20" aria-hidden="true">
            <rect width="20" height="20" rx="3" fill="#f4fbff" />
            <path d="M0 0h8v8H0z" fill="#c8ef8e" />
            <path d="M8 20l12-8v8z" fill="#7fe0f8" />
            <path d="M18 2L2 11l6 2 1 6 3-4 4 2z" fill="#1576f0" />
          </svg>
          <span className="ml-1 font-medium">高德地图</span>
          <span className="ml-1 font-['Liberation_Sans','Noto_Sans_CJK_SC',sans-serif]">© 2020 AutoNavi - GS(2019)6379号</span>
        </div>
      </div>
    </div>
  </section>
);

const App = () => {
  return (
    <div className="relative flex h-screen flex-col overflow-hidden bg-white font-['Noto_Sans_CJK_SC',sans-serif]">
      <div className="flex h-1 shrink-0 bg-[#e7ebf2]">
        <div className="ml-[156px] w-[148px] bg-white" />
      </div>
      <Header />
      <MainNav />
      <PageTabs />

      <main className="flex min-h-0 flex-1">
        <TrackPanel />
        <MapPanel />
        <div className="w-[6px] bg-[#f2f2f2]">
          <div className="h-[573px] bg-[#cacaca]" />
        </div>
      </main>

      <div className="flex h-1 shrink-0 gap-0.5 border-t border-[#555] bg-[#dcdcdc] pl-[252px]">
        <div className="w-[60px] rounded-t-xs border-x border-[#444] bg-[#eee]" />
        <div className="w-[60px] rounded-t-xs border-x border-[#444] bg-[#eee]" />
        <div className="w-[60px] rounded-t-xs border-x border-[#444] bg-[#eee]" />
        <div className="w-[60px] rounded-t-xs border-x border-[#444] bg-[#eee]" />
        <div className="ml-[62px] w-[60px] rounded-t-xs border-x border-[#444] bg-[#eee]" />
        <div className="w-[56px] rounded-t-xs border-x border-[#444] bg-[#eee]" />
      </div>

      {/* annotation frames over the first two sub tabs */}
      <div className="pointer-events-none absolute left-[21px] top-[157px] h-[50px] w-[103px] border border-[#f33]" />
      <div className="pointer-events-none absolute left-[131px] top-[153px] h-[55px] w-[119px] border border-[#f33]" />
      <ImeBar />
    </div>
  );
};

export default App;
